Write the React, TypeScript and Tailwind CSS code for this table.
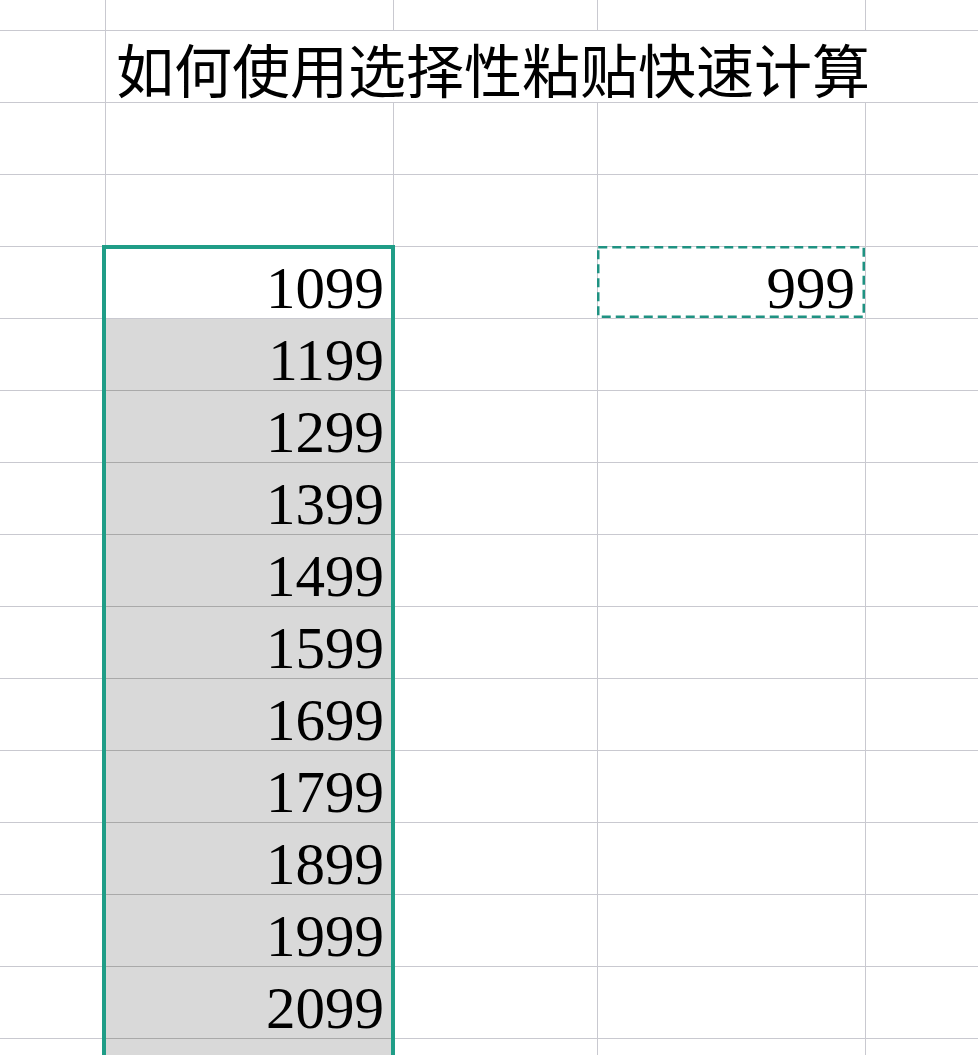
const values = [1099, 1199, 1299, 1399, 1499, 1599, 1699, 1799, 1899, 1999, 2099, 0];

const line = 'border-[#c9c9d0]';

function EmptyRow({ h }: { h: string }) {
  return (
    <div className={`flex ${h}`}>
      <div className={`w-[106px] border-r border-b ${line}`} />
      <div className={`w-[288px] border-r border-b ${line}`} />
      <div className={`w-[204px] border-r border-b ${line}`} />
      <div className={`w-[268px] border-r border-b ${line}`} />
      <div className={`flex-1 border-b ${line}`} />
    </div>
  );
}

function DataRow({ value, first, extra }: { value: number; first: boolean; extra?: string }) {
  return (
    <div className="flex h-[72px]">
      <div className={`w-[106px] border-r border-b ${line}`} />
      <div
        className={`w-[288px] border-r border-b flex items-end justify-end pr-[9px] ${
          first ? `bg-white ${line}` : 'bg-[#d9d9d9] border-b-[#a9a9a9]'
        } ${line}`}
      >
        {value > 0 && <span className="text-[59px] leading-none text-black">{value}</span>}
      </div>
      <div className={`w-[204px] border-r border-b ${line}`} />
      <div className={`w-[268px] border-r border-b ${line} flex items-end justify-end pr-[10px]`}>
        {extra && <span className="text-[59px] leading-none text-black">{extra}</span>}
      </div>
      <div className={`flex-1 border-b ${line}`} />
    </div>
  );
}

export default function App() {
  return (
    <div
      className="relative w-[978px] h-[1055px] overflow-hidden bg-white"
      style={{ fontFamily: '"Liberation Serif", "Noto Sans CJK SC", serif' }}
    >
      <EmptyRow h="h-[31px]" />
      <div className="flex h-[72px]">
        <div className={`w-[106px] border-r border-b ${line}`} />
        <div className={`flex-1 border-b ${line} flex items-end pl-[10px] pb-[5px]`}>
          <span
            className="text-[58px] leading-none text-black whitespace-nowrap"
            style={{ fontFamily: '"Noto Sans CJK SC", sans-serif' }}
          >
            如何使用选择性粘贴快速计算
          </span>
        </div>
      </div>
      <EmptyRow h="h-[72px]" />
      <EmptyRow h="h-[72px]" />
      {values.map((v, i) => (
        <DataRow key={i} value={v} first={i === 0} extra={i === 0 ? '999' : undefined} />
      ))}

      {/* selection frame */}
      <div className="pointer-events-none absolute left-[102px] top-[245px] w-[293px] h-[900px] border-4 border-[#1f9d87]" />

      {/* copy marquee */}
      <svg className="pointer-events-none absolute left-[597px] top-[246px]" width="268" height="72">
        <rect x="1.25" y="1.25" width="265.5" height="69.5" fill="none" stroke="#1f9282" strokeWidth="2.5" strokeDasharray="9 5" />
      </svg>
    </div>
  );
}
